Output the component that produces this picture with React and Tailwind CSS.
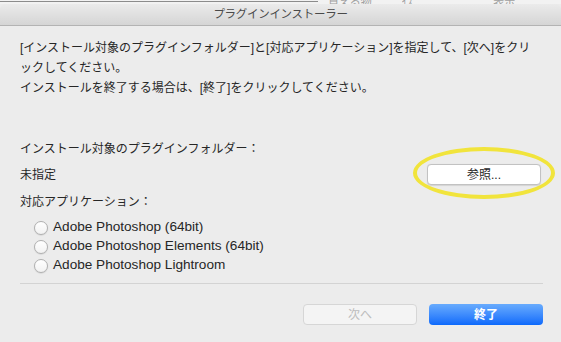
import React from 'react';

const jp = { fontFamily: '"Liberation Sans", "Noto Sans CJK JP", sans-serif' };

// Radio option row
const RadioRow = ({ label }) => (
  <div className="flex items-center h-[19px] pl-[14px]">
    <span className="w-[14px] h-[14px] rounded-full border border-[#b0b0b0] bg-gradient-to-b from-white to-[#f2f2f2] shadow-[0_0.5px_1px_rgba(0,0,0,0.15)]" />
    <span className="ml-[5px] text-[13.6px] text-[#262626]">{label}</span>
  </div>
);

export default function App() {
  return (
    <div lang="ja" style={jp} className="relative w-[561px] h-[342px] overflow-hidden bg-[#ececec] flex flex-col">
      {/* window behind the sheet */}
      <div className="h-[4px] overflow-hidden bg-[#f2f2f2] flex items-start text-[11px] text-[#a0a0a0]">
        <div className="w-[318px] border-t border-[#8c8c8c] mt-[1px]" />
        <span className="ml-[10px] h-[4px] overflow-hidden leading-[4px]">買える物</span>
        <span className="ml-[30px] h-[4px] overflow-hidden leading-[4px]">ｲｽﾞ</span>
        <span className="ml-[75px] h-[4px] overflow-hidden leading-[4px]">表示</span>
      </div>

      {/* title bar */}
      <div className="h-[22px] rounded-t-[5px] bg-gradient-to-b from-[#ebebeb] to-[#d5d5d5] border-b border-[#b3b3b3] flex items-center justify-center">
        <span className="text-[11.5px] text-[#4a4a4a] tracking-[-0.3px]">プラグインインストーラー</span>
      </div>

      <div className="flex flex-col px-[20px] text-[12px] text-[#262626]">
        <p className="mt-[12px] w-[522px] leading-[20px]">
          [インストール対象のプラグインフォルダー]と[対応アプリケーション]を指定して、[次へ]をクリックしてください。
          <br />
          インストールを終了する場合は、[終了]をクリックしてください。
        </p>

        <div className="mt-[41px] leading-[20px]">インストール対象のプラグインフォルダー：</div>

        <div className="mt-[5px] h-[21px] flex items-center justify-between">
          <span>未指定</span>
          <button className="w-[114px] h-[21px] rounded-[4px] bg-white border border-[#c2c2c2] shadow-[0_0.5px_1px_rgba(0,0,0,0.1)] text-[12px] text-[#262626]">
            参照...
          </button>
        </div>

        <div className="mt-[7px] leading-[20px]">対応アプリケーション：</div>

        <div className="mt-[6px] flex flex-col">
          <RadioRow label="Adobe Photoshop (64bit)" />
          <RadioRow label="Adobe Photoshop Elements (64bit)" />
          <RadioRow label="Adobe Photoshop Lightroom" />
        </div>

        <div className="mt-[8px] h-px w-[523px] bg-[#d3d3d3]" />

        <div className="mt-[20px] w-[523px] flex justify-end gap-[12px]">
          <button className="w-[114px] h-[21px] rounded-[4px] bg-[#f4f4f4] border border-[#d6d6d6] text-[12px] text-[#bdbdbd]">
            次へ
          </button>
          <button className="w-[114px] h-[21px] rounded-[4px] bg-gradient-to-b from-[#68abfd] to-[#0a69fb] text-[12px] font-semibold text-white">
            終了
          </button>
        </div>
      </div>

      {/* yellow highlight annotation */}
      <div className="absolute left-[413px] top-[147px] w-[142px] h-[52px] rounded-[50%] border-[4px] border-[#f1e43c]" />
    </div>
  );
}
